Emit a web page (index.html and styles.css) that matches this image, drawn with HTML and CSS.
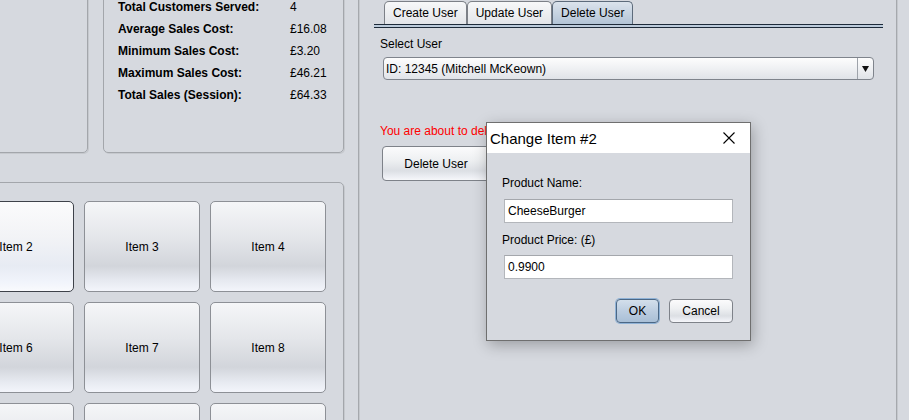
FILE: index.html
```html
<!DOCTYPE html>
<html>
<head>
<meta charset="utf-8">
<link rel="stylesheet" href="styles.css">
</head>
<body>
<div class="app">
  <div class="left">
    <div class="stats-row">
      <div class="panel panel-a"></div>
      <div class="panel panel-stats">
        <div class="stats">
          <span>Total Customers Served:</span><span class="val">4</span>
          <span>Average Sales Cost:</span><span class="val">£16.08</span>
          <span>Minimum Sales Cost:</span><span class="val">£3.20</span>
          <span>Maximum Sales Cost:</span><span class="val">£46.21</span>
          <span>Total Sales (Session):</span><span class="val">£64.33</span>
        </div>
      </div>
    </div>
    <div class="panel panel-items">
      <div class="items">
        <button class="item">Item 1</button>
        <button class="item hover">Item 2</button>
        <button class="item">Item 3</button>
        <button class="item">Item 4</button>
        <button class="item">Item 5</button>
        <button class="item">Item 6</button>
        <button class="item">Item 7</button>
        <button class="item">Item 8</button>
        <button class="item">Item 9</button>
        <button class="item">Item 10</button>
        <button class="item">Item 11</button>
        <button class="item">Item 12</button>
      </div>
    </div>
  </div>
  <div class="divider"></div>
  <div class="right">
    <div class="tabs">
      <div class="tab">Create User</div>
      <div class="tab">Update User</div>
      <div class="tab selected">Delete User</div>
    </div>
    <div class="tab-line"></div>
    <div class="tab-body">
      <div class="label">Select User</div>
      <div class="combo">
        <span class="combo-text">ID: 12345 (Mitchell McKeown)</span>
        <span class="combo-arrow"><svg width="7" height="6" viewBox="0 0 7 6"><path d="M0 0 H7 L3.5 6 Z" fill="#111"/></svg></span>
      </div>
      <div class="warning">You are about to delete this user!</div>
      <button class="btn delete-btn">Delete User</button>
    </div>
  </div>
</div>

<div class="dialog">
  <div class="titlebar">
    <span class="title">Change Item #2</span>
    <span class="close"><svg width="12" height="12" viewBox="0 0 12 12"><path d="M0.5 0.5 L11.5 11.5 M11.5 0.5 L0.5 11.5" stroke="#000" stroke-width="1.1" fill="none"/></svg></span>
  </div>
  <div class="dialog-body">
    <div class="dlabel">Product Name:</div>
    <div class="field">CheeseBurger</div>
    <div class="dlabel second">Product Price: (£)</div>
    <div class="field price">0.9900</div>
    <div class="actions">
      <button class="btn ok">OK</button>
      <button class="btn cancel">Cancel</button>
    </div>
  </div>
</div>
</body>
</html>
```
FILE: styles.css
```css
html, body {
  margin: 0;
  padding: 0;
  overflow: hidden;
}
body {
  width: 909px;
  height: 420px;
  background: #d6d9df;
  font-family: "Liberation Sans", Arial, sans-serif;
  font-size: 12px;
  color: #000;
  position: relative;
}
.app {
  display: flex;
  height: 420px;
  overflow: hidden;
}
.left {
  flex: none;
  width: 534px;
  margin-left: -190px;
  display: flex;
  flex-direction: column;
}
.panel {
  box-sizing: border-box;
  border: 1px solid #a3a6ab;
  border-radius: 5px;
  box-shadow: 1px 1px 0 #c6c9ce;
}
.stats-row {
  flex: none;
  display: flex;
  gap: 15px;
  height: 193px;
  margin-top: -40px;
}
.panel-a {
  width: 278px;
}
.panel-stats {
  flex: 1;
  padding: 35px 0 0 14px;
}
.stats {
  display: grid;
  grid-template-columns: 172px auto;
  grid-auto-rows: 22px;
  align-items: center;
  font-weight: bold;
}
.stats .val {
  font-weight: normal;
}
.panel-items {
  flex: none;
  height: 400px;
  margin-top: 29px;
  padding: 18px 0 0 21px;
}
.items {
  display: grid;
  grid-template-columns: repeat(4, 116px);
  grid-auto-rows: 91px;
  gap: 10px;
}
.item {
  font-family: inherit;
  font-size: 12px;
  color: #000;
  border: 1px solid #8d9096;
  border-radius: 5px;
  background: linear-gradient(#f5f6f8 0%, #e4e6ea 40%, #d2d5db 72%, #e6e9f0 88%, #f3f5fb 100%);
  padding: 0;
}
.item.hover {
  border-color: #3e424a;
  background: linear-gradient(#fbfbfc 0%, #f2f3f6 40%, #e7ebf3 72%, #f1f4fb 90%, #f9fafd 100%);
}
.divider {
  flex: none;
  width: 14px;
}
.right {
  flex: none;
  width: 539px;
  box-sizing: border-box;
  border-left: 1px solid #a5a8ad;
  border-right: 1px solid #a5a8ad;
  box-shadow: inset 1px 0 0 #c5c8cd, 1px 0 0 #c5c8cd;
}
.tabs {
  display: flex;
  height: 23px;
  margin-top: 1px;
  padding-left: 25px;
}
.tab {
  box-sizing: border-box;
  height: 23px;
  padding: 0 8px;
  line-height: 23px;
  border: 1px solid #7c8087;
  border-bottom: none;
  border-radius: 5px 5px 0 0;
  background: linear-gradient(#f7f8f9, #e3e5e9);
}
.tab.selected {
  background: linear-gradient(#dbe3ec, #b3c4d6);
  border-color: #5d6b7b;
}
.tab-line {
  height: 2px;
  margin: 0 13px 0 15px;
  border-top: 1px solid #1d2a39;
  border-bottom: 1px solid #1d2a39;
  background: #bccbdb;
}
.tab-body {
  display: flex;
  flex-direction: column;
  align-items: flex-start;
  padding-left: 21px;
}
.label {
  margin-top: 9px;
  line-height: 15px;
}
.combo {
  box-sizing: border-box;
  margin-top: 5px;
  margin-left: 3px;
  width: 491px;
  height: 23px;
  display: flex;
  align-items: center;
  border: 1px solid #7f848c;
  border-radius: 4px;
  background: linear-gradient(#fdfdfd, #eceef1 60%, #e0e3e8);
}
.combo-text {
  flex: 1;
  padding-left: 2px;
}
.combo-arrow {
  flex: none;
  width: 16px;
  height: 21px;
  box-sizing: border-box;
  border-left: 1px solid #9ea3aa;
  display: flex;
  align-items: center;
  justify-content: center;
}
.warning {
  margin-top: 44px;
  line-height: 15px;
  color: #ff0000;
}
.btn {
  font-family: inherit;
  font-size: 12px;
  color: #000;
  border: 1px solid #7e8289;
  border-radius: 4px;
  background: linear-gradient(#fbfbfc 0%, #eef0f2 40%, #dcdfe4 72%, #eceef3 90%, #f6f7fa 100%);
  padding: 0;
}
.delete-btn {
  margin-top: 7px;
  margin-left: 2px;
  width: 108px;
  height: 35px;
}
.dialog {
  position: absolute;
  left: 486px;
  top: 122px;
  width: 265px;
  height: 219px;
  box-sizing: border-box;
  border: 1px solid #6f6f6f;
  background: #d6d9df;
  box-shadow: 2px 4px 14px rgba(0, 0, 0, 0.28);
  display: flex;
  flex-direction: column;
}
.titlebar {
  flex: none;
  height: 30px;
  background: #fff;
  display: flex;
  align-items: center;
}
.title {
  flex: 1;
  padding-left: 3px;
  font-size: 15px;
  color: #000;
}
.close {
  flex: none;
  width: 42px;
  height: 30px;
  display: flex;
  align-items: center;
  justify-content: center;
}
.dialog-body {
  flex: 1;
  display: flex;
  flex-direction: column;
  padding: 23px 17px 0 17px;
}
.dlabel {
  line-height: 15px;
  margin-left: -2px;
}
.dlabel.second {
  margin-top: 10px;
}
.field {
  box-sizing: border-box;
  margin-top: 8px;
  height: 24px;
  line-height: 23px;
  padding-left: 3px;
  background: #fff;
  border: 1px solid #b3b6bb;
  border-top-color: #a4a7ac;
}
.field.price {
  margin-top: 7px;
}
.actions {
  margin-top: 20px;
  display: flex;
  justify-content: flex-end;
  gap: 10px;
}
.ok {
  width: 43px;
  height: 24px;
  border-color: #4b6785;
  background: linear-gradient(#d3dfeb, #bccde0 50%, #a9bfd6);
  box-shadow: 0 0 0 1px #8fb2d6;
}
.cancel {
  width: 64px;
  height: 24px;
}
```
